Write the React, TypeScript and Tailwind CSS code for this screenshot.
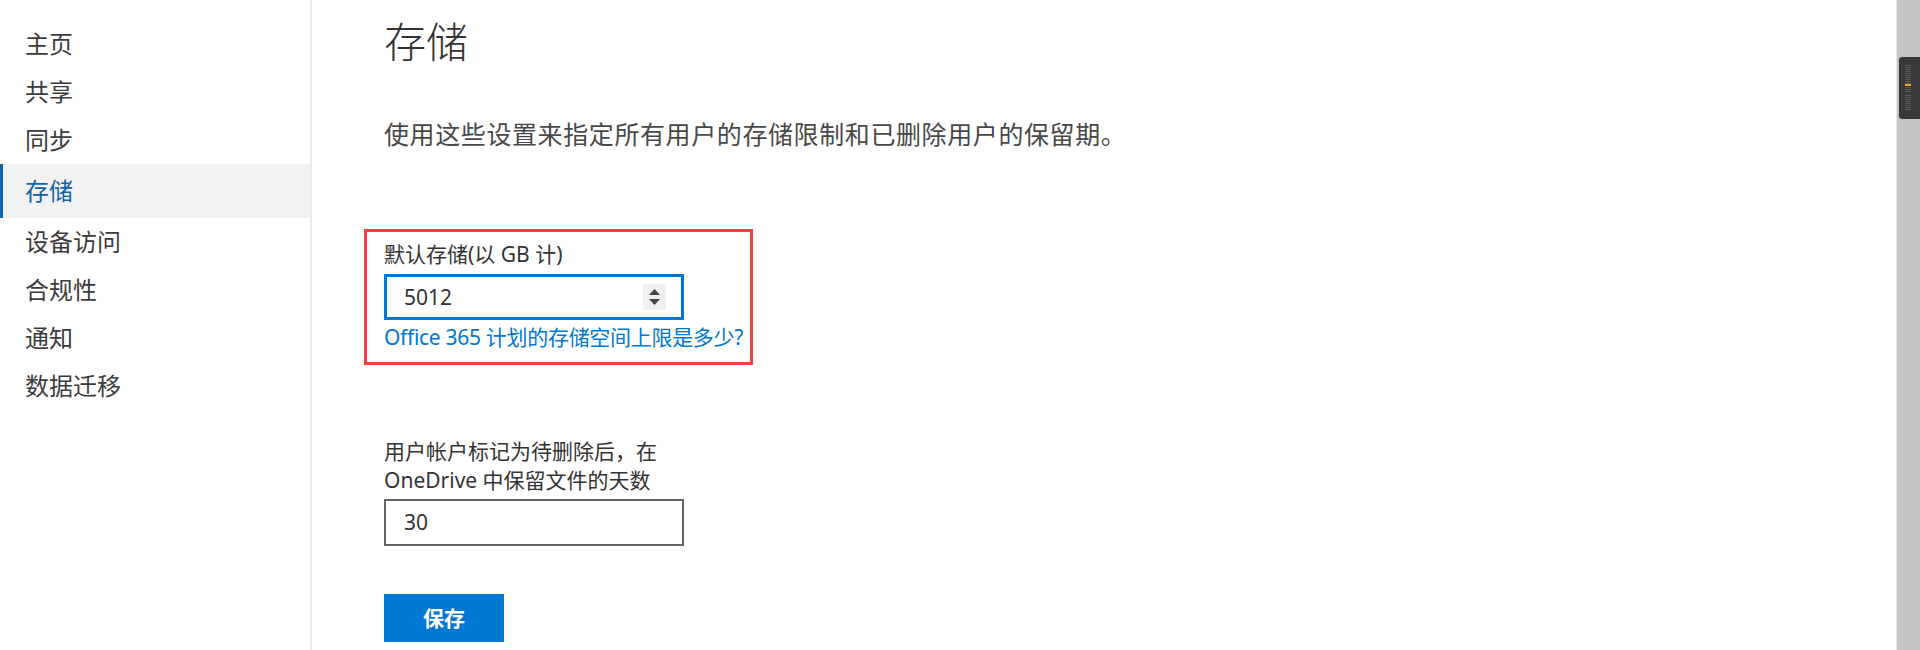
import React from "react";

const NAV_ITEMS = [
  { label: "主页" },
  { label: "共享" },
  { label: "同步" },
  { label: "存储", active: true },
  { label: "设备访问" },
  { label: "合规性" },
  { label: "通知" },
  { label: "数据迁移" },
];

const FONT = "font-['Noto_Sans','Noto_Sans_CJK_SC',sans-serif]";

function Sidebar() {
  return (
    <aside className="w-[312px] shrink-0 border-r-2 border-[#ebebeb] pt-[20px]">
      <nav className="flex flex-col">
        {NAV_ITEMS.map((item) =>
          item.active ? (
            <div
              key={item.label}
              className="h-[54px] flex items-center pl-[22px] border-l-[3px] border-[#1163a9] bg-[#f2f2f2] text-[24px] leading-none text-[#1163a9]"
            >
              {item.label}
            </div>
          ) : (
            <div
              key={item.label}
              className="h-[48px] flex items-center pl-[25px] text-[24px] leading-none text-[#3c3c3c]"
            >
              {item.label}
            </div>
          )
        )}
      </nav>
    </aside>
  );
}

function SpinButtons() {
  return (
    <div className="w-[23px] h-[26px] bg-[#f0f0f0] flex flex-col items-center justify-center gap-[4px]">
      <svg width="11" height="6" viewBox="0 0 11 6">
        <path d="M5.5 0 L11 6 L0 6 Z" fill="#444" />
      </svg>
      <svg width="11" height="6" viewBox="0 0 11 6">
        <path d="M0 0 L11 0 L5.5 6 Z" fill="#444" />
      </svg>
    </div>
  );
}

function ScrollBar() {
  const grips = Array.from({ length: 23 }, (_, i) => i);
  return (
    <div className="w-[24px] shrink-0 border-l border-[#ececec] bg-[#c4c4c4] pt-[57px] pl-[2px]">
      <div className="h-[62px] w-full rounded-l-[3px] bg-[#383838] flex justify-center">
        <svg width="6" height="62" viewBox="0 0 6 62" className="-ml-[4px]">
          {grips.map((i) =>
            i === 14 ? null : (
              <rect key={i} x="0" y={8 + i * 2} width="6" height="1" fill="#5a5a5a" />
            )
          )}
          <rect x="0" y="27" width="6" height="2" fill="#f0a21c" />
        </svg>
      </div>
    </div>
  );
}

export default function App() {
  return (
    <div className={`h-[650px] w-full flex bg-white overflow-hidden ${FONT}`}>
      <Sidebar />

      <main className="flex-1 pl-[72px] flex flex-col items-start">
        <h1 className="mt-[21px] text-[42px] leading-none font-light text-[#333]">存储</h1>

        <p className="mt-[59px] text-[25px] tracking-[0.6px] leading-none text-[#484848]">
          使用这些设置来指定所有用户的存储限制和已删除用户的保留期。
        </p>

        <div className="mt-[82px] -ml-[20px] w-[389px] border-[3px] border-[#ff3b3b] pl-[17px] pt-[12px] pb-[14px] flex flex-col items-start">
          <label className="text-[21px] leading-none text-[#333]">默认存储(以 GB 计)</label>
          <div className="mt-[9px] w-[300px] h-[46px] border-[3px] border-[#0078d4] flex items-center justify-between pl-[17px] pr-[15px]">
            <span className="text-[21px] leading-none text-[#333]">5012</span>
            <SpinButtons />
          </div>
          <a className="mt-[7px] whitespace-nowrap tracking-[-0.3px] text-[21px] leading-none text-[#0078d4]">
            Office 365 计划的存储空间上限是多少?
          </a>
        </div>

        <label className="mt-[72px] text-[21px] leading-[29px] text-[#333]">
          用户帐户标记为待删除后，在
          <br />
          OneDrive 中保留文件的天数
        </label>
        <div className="mt-[4px] w-[300px] h-[47px] border-2 border-[#666] flex items-center pl-[18px]">
          <span className="text-[21px] leading-none text-[#333]">30</span>
        </div>

        <button className="mt-[48px] w-[120px] h-[48px] bg-[#0078d4] text-white text-[21px] font-bold leading-none">
          保存
        </button>
      </main>

      <ScrollBar />
    </div>
  );
}
